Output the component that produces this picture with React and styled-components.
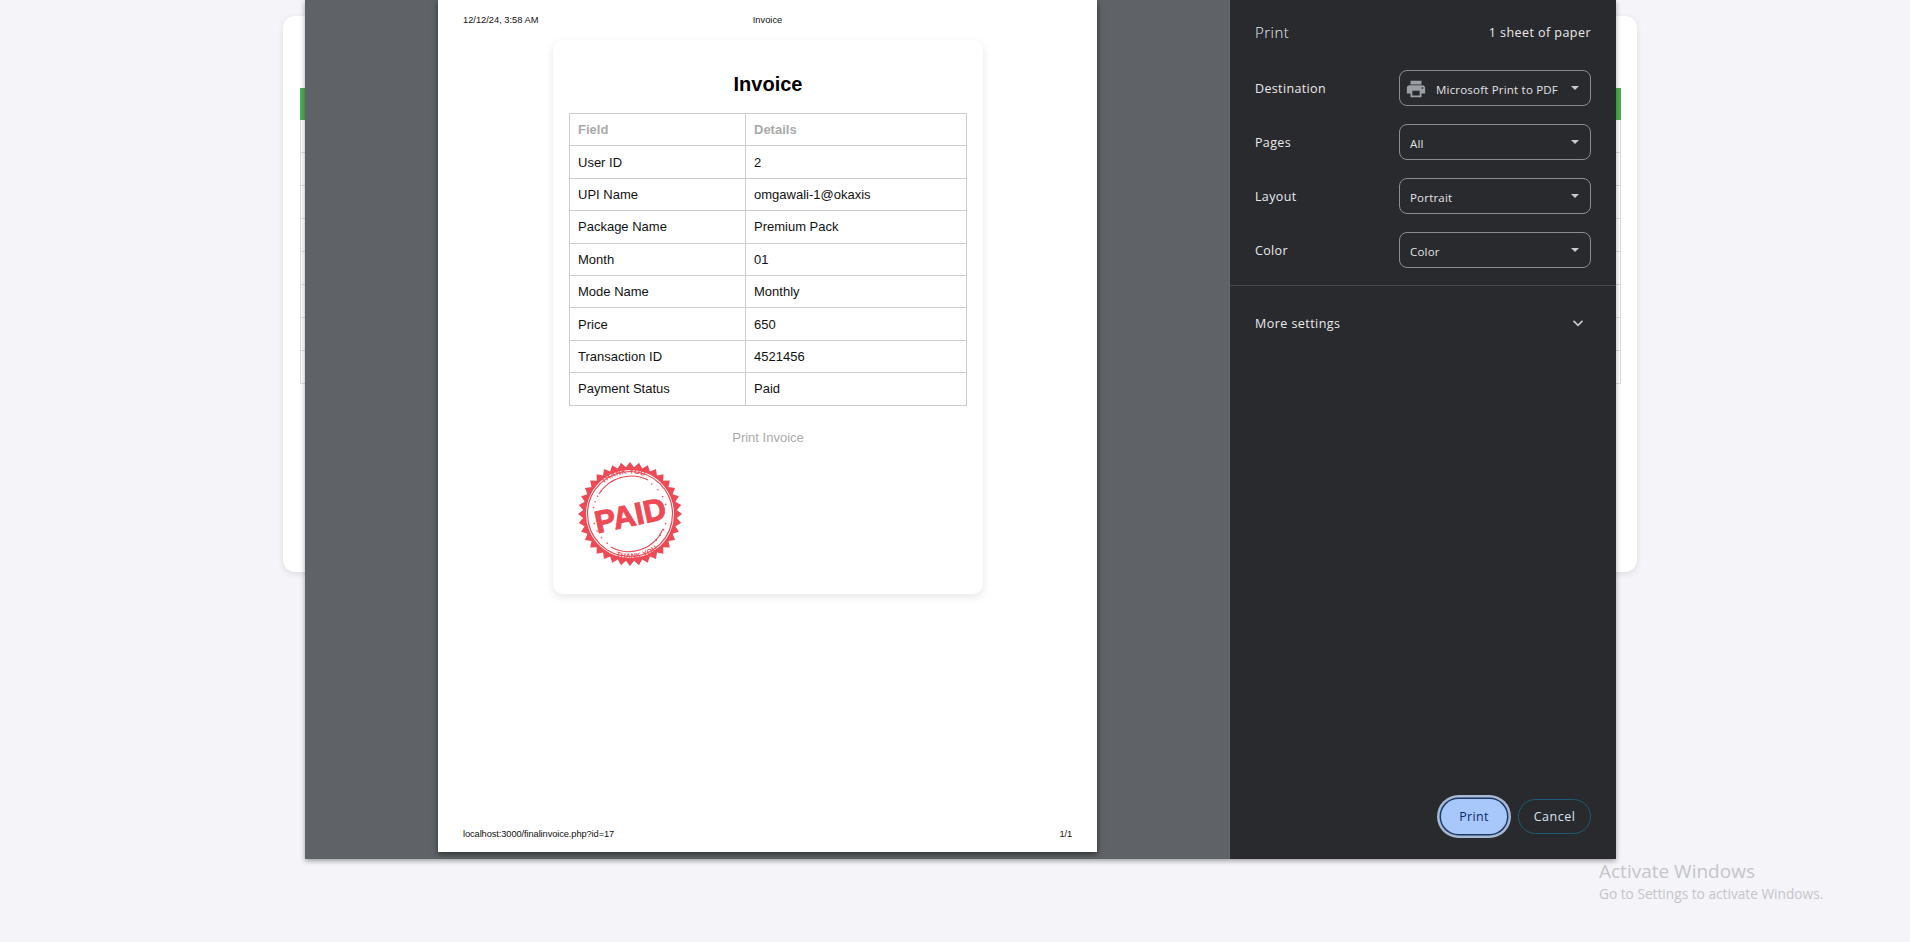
import React from "react";
import styled, { createGlobalStyle } from "styled-components";

const Global = createGlobalStyle`
  html, body { margin: 0; height: 942px; overflow: hidden; background: #f4f4f9; }
  * { box-sizing: border-box; }
`;
const Page = styled.div`position: relative; width: 1910px; height: 942px; padding: 16px 0 0 283px;`;
const BackCard = styled.div`
  width: 1354px; height: 556px; background: #fff; border-radius: 12px;
  padding: 72px 16px 0 17px; box-shadow: 0 2px 6px rgba(0,0,0,.1);
`;
const BackHead = styled.div`height: 32px; background: #4caf50;`;
const BackRow = styled.div`height: 33px; border: 1px solid #ddd; border-top: 0;`;

const Modal = styled.div`
  position: absolute; left: 305px; top: 0; width: 1311px; height: 859px; display: flex;
  box-shadow: 0 2px 5px rgba(0,0,0,.35);
`;
const Preview = styled.div`
  width: 925px; height: 100%; background: #5f6367; padding: 0 133px 7px;
  border-right: 1px solid #66696d;
`;
const Sheet = styled.div`
  width: 659px; height: 852px; background: #fff; display: flex; flex-direction: column;
  padding: 14px 25px 12px; font-family: "Liberation Sans", Arial, sans-serif; color: #111;
  box-shadow: 0 2px 6px rgba(0,0,0,.55);
`;
const SheetMeta = styled.div`
  display: grid; grid-template-columns: 1fr 1fr 1fr; font-size: 9.3px; line-height: 12px;
  & > :nth-child(2) { text-align: center; }
  & > :nth-child(3) { text-align: right; }
`;
const SheetFoot = styled(SheetMeta)`
  margin-top: auto; grid-template-columns: 1fr 1fr; letter-spacing: -.1px;
  & > :nth-child(2) { text-align: right; }
`;
const Invoice = styled.div`
  width: 430px; height: 554px; margin: 14px 0 0 90px; padding: 32px 16px 0; background: #fff;
  border-radius: 10px; box-shadow: 0 3px 9px rgba(0,0,0,.1);
`;
const Title = styled.h1`margin: 0 0 17px; text-align: center; font-size: 20px; line-height: 24px; font-weight: 700; color: #000;`;
const Table = styled.table`width: 398px; table-layout: fixed; border-collapse: collapse; font-size: 13px;`;
const Cell = styled.td`
  height: 32.4px; padding: 0 8px; border: 1px solid #ccc; color: #111; line-height: 15px;
  &:first-child { width: 176px; }
`;
const HeadCell = styled(Cell).attrs({ as: "th" })`text-align: left; color: #aaa; font-weight: 700;`;
const PrintLink = styled.div`margin-top: 24px; text-align: center; color: #aaa; font-size: 13px; line-height: 15px;`;
const Stamp = styled.svg`display: block; width: 106px; height: 106px; margin: 16px 0 0 8px;`;

const Side = styled.aside`
  flex: 1; background: #292a2d; color: #e8eaed; font-family: "Open Sans", "Noto Sans", sans-serif;
  display: flex; flex-direction: column; position: relative;
`;
const SideHead = styled.div`display: flex; justify-content: space-between; align-items: center; height: 22px; margin: 21px 25px 27px;`;
const SideTitle = styled.div`font-size: 15px; font-weight: 300; letter-spacing: .5px;`;
const Sheets = styled.div`font-size: 12.5px; letter-spacing: .45px;`;
const Settings = styled.div`display: flex; flex-direction: column; gap: 18px; padding: 0 25px 17px; border-bottom: 1px solid #46474a;`;
const Row = styled.div`display: flex; align-items: center; justify-content: space-between; height: 36px; font-size: 12.5px; letter-spacing: .35px;`;
const Select = styled.div`
  position: relative; width: 192px; height: 36px; border: 1px solid #8c8d90; border-radius: 8px;
  display: flex; align-items: center; gap: 9px; padding: 2px 0 0 ${p => (p.$icon ? "5px" : "10px")};
  font-size: 11.5px; letter-spacing: .2px; color: #e3e3e3;
  &::after {
    content: ""; position: absolute; right: 11px; top: 15px; border: 4px solid transparent;
    border-top: 4.5px solid #c8cacc; border-bottom: 0;
  }
`;
const More = styled.div`display: flex; align-items: center; justify-content: space-between; height: 74px; padding: 0 31px 0 25px; font-size: 12.5px; letter-spacing: .45px;`;
const Actions = styled.div`margin-top: auto; display: flex; justify-content: flex-end; align-items: center; gap: 7px; padding: 0 25px 21px;`;
const PrimaryButton = styled.div`
  width: 66px; height: 35px; border-radius: 18px; background: #a8c7fa; color: #062e6f;
  display: flex; align-items: center; justify-content: center; margin: 4px; font-size: 12.5px; letter-spacing: .3px;
  box-shadow: 0 0 0 1.5px #1c3a66, 0 0 0 4px #a9b9d3;
`;
const GhostButton = styled.div`
  width: 73px; height: 35px; border-radius: 18px; border: 1px solid #1d5a78; color: #d5e3f5;
  display: flex; align-items: center; justify-content: center; font-size: 12.5px; letter-spacing: .5px;
`;
const Watermark = styled.div`position: absolute; left: 1599px; top: 858px; color: #c5c5ca; font-family: "Open Sans", sans-serif; font-weight: 400;`;
const WmTitle = styled.div`font-size: 19px; line-height: 26px;`;
const WmSub = styled.div`font-size: 13.7px; line-height: 20px;`;

const rows = [["User ID", "2"], ["UPI Name", "omgawali-1@okaxis"], ["Package Name", "Premium Pack"], ["Month", "01"], ["Mode Name", "Monthly"], ["Price", "650"], ["Transaction ID", "4521456"], ["Payment Status", "Paid"]];

function scallop(cx, cy, r1, r2, n) {
  const pts = [];
  for (let i = 0; i < n * 2; i++) {
    const a = (i / (n * 2)) * Math.PI * 2;
    const r = i % 2 ? r2 : r1;
    pts.push(`${(cx + r * Math.cos(a)).toFixed(2)} ${(cy + r * Math.sin(a)).toFixed(2)}`);
  }
  return `M${pts.join("L")}Z`;
}
function dots(radius, from, to, n) {
  return Array.from({ length: n }, (_, i) => {
    const a = ((from + ((to - from) * i) / (n - 1)) * Math.PI) / 180;
    return <circle key={`${radius}${from}${i}`} cx={53 + radius * Math.cos(a)} cy={53 + radius * Math.sin(a)} r=".8" />;
  });
}

function PaidStamp() {
  const red = "#ee4a55";
  return (
    <Stamp viewBox="0 0 106 106" aria-label="Paid, thank you">
      <defs>
        <path id="topArc" d="M 12.5 53 A 40.5 40.5 0 0 1 93.5 53" />
        <path id="bottomArc" d="M 8.5 53 A 44.5 44.5 0 0 0 97.5 53" />
      </defs>
      <path d={scallop(53, 53, 52, 47, 36)} fill={red} />
      <circle cx="53" cy="53" r="44" fill="#fff" />
      <circle cx="53" cy="53" r="42.5" fill="none" stroke={red} strokeWidth="1.2" />
      <g fill={red} fontFamily="'Liberation Sans', sans-serif" fontWeight="700" transform="rotate(-10 53 53)">
        <text fontSize="7.2" letterSpacing=".2"><textPath href="#topArc" startOffset="50%" textAnchor="middle" transform="">THANK YOU</textPath></text>
        <text fontSize="7.2" letterSpacing=".2"><textPath href="#bottomArc" startOffset="50%" textAnchor="middle">THANK YOU</textPath></text>
      </g>
      <g fill={red}>{dots(37, 190, 218, 4)}{dots(37, 306, 345, 4)}{dots(37, 15, 45, 4)}{dots(37, 128, 165, 4)}</g>
      <path d="M22 33 A38 38 0 0 1 71 19" fill="none" stroke={red} strokeWidth="1.1" />
      <path d="M34 86 A37 37 0 0 0 86 68" fill="none" stroke={red} strokeWidth="1.1" />
      <text x="53" y="65" textAnchor="middle" fontFamily="'Liberation Sans', sans-serif" fontWeight="700" fontSize="31" fill={red} stroke={red} strokeWidth="1" transform="rotate(-12 53 53)" textLength="72" lengthAdjust="spacingAndGlyphs">PAID</text>
    </Stamp>
  );
}

export default function App() {
  return (
    <Page>
      <Global />
      <BackCard>
        <BackHead />
        {Array.from({ length: 8 }, (_, i) => <BackRow key={i} />)}
      </BackCard>
      <Modal>
        <Preview>
          <Sheet>
            <SheetMeta><span>12/12/24, 3:58 AM</span><span>Invoice</span><span /></SheetMeta>
            <Invoice>
              <Title>Invoice</Title>
              <Table>
                <thead><tr><HeadCell>Field</HeadCell><HeadCell>Details</HeadCell></tr></thead>
                <tbody>{rows.map(([a, b]) => <tr key={a}><Cell>{a}</Cell><Cell>{b}</Cell></tr>)}</tbody>
              </Table>
              <PrintLink>Print Invoice</PrintLink>
              <PaidStamp />
            </Invoice>
            <SheetFoot><span>localhost:3000/finalinvoice.php?id=17</span><span>1/1</span></SheetFoot>
          </Sheet>
        </Preview>
        <Side>
          <SideHead><SideTitle>Print</SideTitle><Sheets>1 sheet of paper</Sheets></SideHead>
          <Settings>
            <Row>Destination
              <Select $icon>
                <svg width="22" height="22" viewBox="0 0 24 24" fill="#9aa0a6"><path d="M19 8H5c-1.66 0-3 1.34-3 3v6h4v4h12v-4h4v-6c0-1.66-1.34-3-3-3zm-3 11H8v-5h8v5zm3-7c-.55 0-1-.45-1-1s.45-1 1-1 1 .45 1 1-.45 1-1 1zm-1-9H6v4h12V3z" /></svg>
                Microsoft Print to PDF
              </Select>
            </Row>
            <Row>Pages<Select>All</Select></Row>
            <Row>Layout<Select>Portrait</Select></Row>
            <Row>Color<Select>Color</Select></Row>
          </Settings>
          <More>More settings
            <svg width="14" height="14" viewBox="0 0 14 14" fill="none" stroke="#c4c7c5" strokeWidth="1.8"><path d="M2.5 4.8 7 9.3l4.5-4.5" /></svg>
          </More>
          <Actions><PrimaryButton>Print</PrimaryButton><GhostButton>Cancel</GhostButton></Actions>
        </Side>
      </Modal>
      <Watermark><WmTitle>Activate Windows</WmTitle><WmSub>Go to Settings to activate Windows.</WmSub></Watermark>
    </Page>
  );
}
